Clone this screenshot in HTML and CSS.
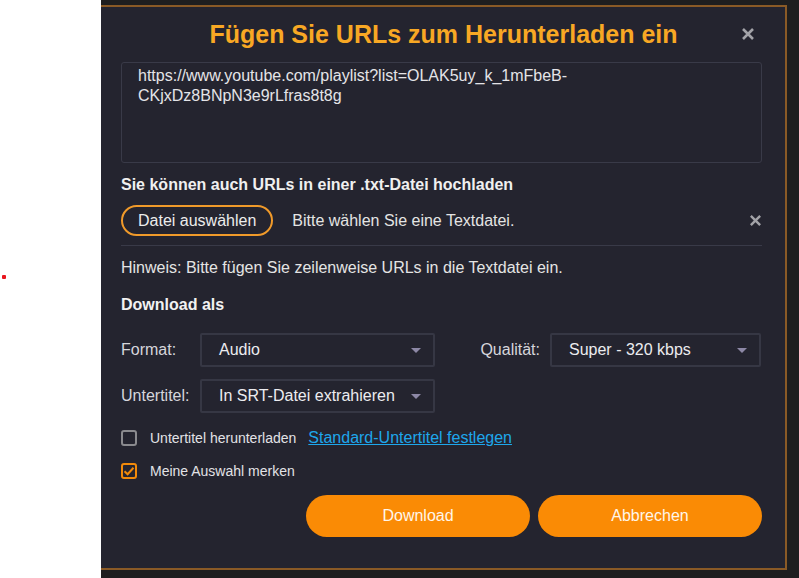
FILE: index.html
```html
<!DOCTYPE html>
<html lang="de">
<head>
<meta charset="utf-8">
<title>URLs hinzufügen</title>
<link rel="stylesheet" href="styles.css">
</head>
<body>
<div class="page">
  <aside class="side"><span class="dot"></span></aside>
  <main class="stage">
    <section class="dialog">
      <header class="head">
        <h1 class="title">Fügen Sie URLs zum Herunterladen ein</h1>
        <button class="x-btn head-x" aria-label="Schließen">
          <svg width="14" height="14" viewBox="0 0 14 14"><path d="M2 2L12 12M12 2L2 12" stroke="currentColor" stroke-width="2.6" stroke-linecap="butt"/></svg>
        </button>
      </header>
      <div class="urls">https://www.youtube.com/playlist?list=OLAK5uy_k_1mFbeB-<br>CKjxDz8BNpN3e9rLfras8t8g</div>
      <p class="sub">Sie können auch URLs in einer .txt-Datei hochladen</p>
      <div class="file-row">
        <button class="file-btn">Datei auswählen</button>
        <span class="file-name">Bitte wählen Sie eine Textdatei.</span>
        <button class="x-btn file-x" aria-label="Entfernen">
          <svg width="13" height="13" viewBox="0 0 14 14"><path d="M2 2L12 12M12 2L2 12" stroke="currentColor" stroke-width="2.6"/></svg>
        </button>
      </div>
      <p class="hint">Hinweis: Bitte fügen Sie zeilenweise URLs in die Textdatei ein.</p>
      <h2 class="sec">Download als</h2>
      <div class="opt-row">
        <div class="field">
          <span class="lbl">Format:</span>
          <div class="select w-left"><span>Audio</span><i class="caret"></i></div>
        </div>
        <div class="field right">
          <span class="lbl lbl-q">Qualität:</span>
          <div class="select w-right"><span>Super - 320 kbps</span><i class="caret"></i></div>
        </div>
      </div>
      <div class="opt-row second">
        <div class="field">
          <span class="lbl">Untertitel:</span>
          <div class="select w-left"><span>In SRT-Datei extrahieren</span><i class="caret"></i></div>
        </div>
      </div>
      <div class="check-row first">
        <span class="box"></span>
        <span class="check-lbl">Untertitel herunterladen</span>
        <a class="link" href="#">Standard-Untertitel festlegen</a>
      </div>
      <div class="check-row">
        <span class="box on">
          <svg width="12" height="12" viewBox="0 0 12 12"><path d="M1.5 6.2L4.6 9.2L10.5 2.8" fill="none" stroke="#f28a0a" stroke-width="2"/></svg>
        </span>
        <span class="check-lbl">Meine Auswahl merken</span>
      </div>
      <div class="actions">
        <button class="pill">Download</button>
        <button class="pill">Abbrechen</button>
      </div>
    </section>
  </main>
</div>
</body>
</html>
```

FILE: styles.css
```css
* { box-sizing: border-box; }
html, body { margin: 0; padding: 0; }
body {
  width: 799px;
  height: 578px;
  overflow: hidden;
  font-family: "Liberation Sans", Arial, sans-serif;
  background: #1e1e1f;
}
.page { display: flex; height: 578px; }
.side {
  width: 101px;
  flex: none;
  background: #ffffff;
  position: relative;
}
.dot {
  position: absolute;
  left: 2px;
  top: 275px;
  width: 4px;
  height: 4px;
  border-radius: 1px;
  background: #e8161e;
}
.stage {
  flex: 1;
  padding: 5px 12px 8px 0;
  display: flex;
}
.dialog {
  flex: 1;
  background: #24242f;
  border: 2px solid #8a5a26;
  border-left: none;
  padding: 0 23px 0 20px;
  color: #e6e6e6;
}
.head {
  height: 55px;
  display: flex;
  align-items: center;
  justify-content: center;
  position: relative;
}
.title {
  margin: 0;
  font-size: 25px;
  font-weight: bold;
  color: #f8a824;
  padding-left: 4px;
}
.x-btn {
  background: none;
  border: none;
  padding: 0;
  color: #a3a3a8;
  display: flex;
  cursor: pointer;
}
.head-x {
  position: absolute;
  right: 7px;
  top: 20px;
}
.urls {
  height: 101px;
  border: 1px solid #393a48;
  border-radius: 3px;
  padding: 3px 16px;
  font-size: 16px;
  line-height: 20px;
  color: #e4e4e8;
}
.sub {
  margin: 12px 0 0;
  font-size: 16px;
  line-height: 20px;
  font-weight: bold;
  color: #f0f0f0;
}
.file-row {
  margin-top: 10px;
  display: flex;
  align-items: center;
  padding-bottom: 9px;
  border-bottom: 1px solid #393a48;
}
.file-btn {
  height: 31px;
  padding: 0 15px;
  border: 2px solid #f09a2a;
  border-radius: 16px;
  background: transparent;
  color: #ececec;
  font-family: inherit;
  font-size: 16px;
}
.file-name {
  margin-left: 19px;
  font-size: 16px;
  color: #e4e4e4;
}
.file-x { margin-left: auto; margin-right: 0; }
.hint {
  margin: 12px 0 0;
  font-size: 16px;
  line-height: 20px;
  color: #e4e4e4;
}
.sec {
  margin: 17px 0 0;
  font-size: 16px;
  line-height: 20px;
  font-weight: bold;
  color: #f2f2f2;
}
.opt-row {
  margin-top: 18px;
  display: flex;
  justify-content: space-between;
}
.opt-row.second { margin-top: 12px; }
.field { display: flex; align-items: center; }
.lbl {
  width: 79px;
  font-size: 16px;
  color: #d6d6dc;
}
.lbl-q { width: auto; margin-right: 10px; }
.field.right { margin-right: 1px; }
.select {
  height: 34px;
  border: 2px solid #363744;
  border-radius: 2px;
  display: flex;
  align-items: center;
  justify-content: space-between;
  padding: 0 12px 0 17px;
  font-size: 16px;
  color: #ececf0;
}
.w-left { width: 235px; }
.w-right { width: 211px; }
.caret {
  width: 0;
  height: 0;
  border-left: 5px solid transparent;
  border-right: 5px solid transparent;
  border-top: 5px solid #8d88a6;
}
.check-row {
  margin-top: 17px;
  display: flex;
  align-items: center;
  height: 16px;
}
.check-row.first { margin-top: 17px; }
.box {
  width: 16px;
  height: 16px;
  border: 2px solid #8a8a8e;
  border-radius: 3px;
  display: flex;
  align-items: center;
  justify-content: center;
}
.box.on { border-color: #f28a0a; }
.check-lbl {
  margin-left: 13px;
  font-size: 14px;
  color: #e2e2e6;
}
.link {
  margin-left: 12px;
  font-size: 16px;
  color: #1ea7ec;
  text-decoration: underline;
}
.actions {
  margin-top: 16px;
  display: flex;
  justify-content: flex-end;
  gap: 8px;
}
.pill {
  width: 224px;
  height: 42px;
  border: none;
  border-radius: 21px;
  background: #fa8b05;
  color: #fff6ea;
  font-family: inherit;
  font-size: 16px;
}
```
